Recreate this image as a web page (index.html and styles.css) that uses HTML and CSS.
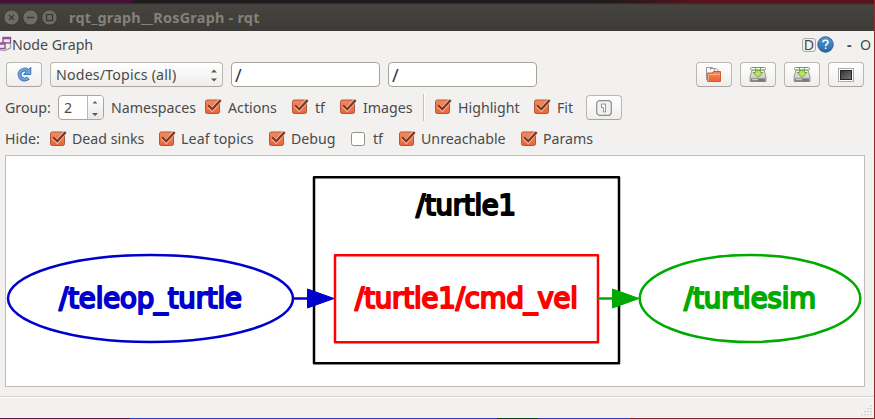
FILE: index.html
```html
<!DOCTYPE html>
<html lang="en">
<head>
<meta charset="utf-8">
<title>rqt_graph__RosGraph - rqt</title>
<link rel="stylesheet" href="styles.css">
</head>
<body>
<svg class="defs" width="0" height="0">
  <defs>
    <linearGradient id="orange" x1="0" y1="0" x2="0" y2="1"><stop offset="0" stop-color="#f58a5c"/><stop offset="1" stop-color="#ea6434"/></linearGradient>
    <linearGradient id="blue" x1="0" y1="0" x2="0" y2="1"><stop offset="0" stop-color="#5b9bd0"/><stop offset="1" stop-color="#2565a5"/></linearGradient>
    <linearGradient id="disk" x1="0" y1="0" x2="0" y2="1"><stop offset="0" stop-color="#f4f4f2"/><stop offset="1" stop-color="#b5b5b2"/></linearGradient>
    <linearGradient id="dark" x1="0" y1="0" x2="1" y2="1"><stop offset="0" stop-color="#333"/><stop offset="1" stop-color="#777"/></linearGradient>
    <symbol id="checked" viewBox="0 0 17 17">
      <rect x=".5" y="2" width="14" height="13.5" rx="1.8" fill="url(#orange)" stroke="#a85a40"/>
      <path d="M3.4 7.6 7.3 11.6 14.5 3" fill="none" stroke="#fbb596" stroke-width="4"/>
      <path d="M3.2 7.2 7.3 11.2 15.7 2" fill="none" stroke="#743a2a" stroke-width="2.3"/>
    </symbol>
    <symbol id="unchecked" viewBox="0 0 17 17"><rect x=".5" y="2.5" width="13" height="13" rx="2" fill="#fff" stroke="#94918c"/></symbol>
    <symbol id="save" viewBox="0 0 18 18">
      <path d="M3 4H15L17 11V15.5H1V11Z" fill="url(#disk)" stroke="#858583" stroke-width=".8"/>
      <path d="M2 12.5H16V15.5H2Z" fill="#777"/><path d="M3 13.7H9" stroke="#ddd"/>
      <rect x="1.5" y="1.5" width="15" height="2.4" rx="1" fill="#fff" stroke="#71a33c"/>
      <path d="M6.5 1.5V4M11.5 1.5V4" stroke="#71a33c"/>
      <path d="M6.6 4.5H11.4V6.5H14L9 11.6 4 6.5H6.6Z" fill="#b8e26a" stroke="#69a32e" stroke-width=".9"/>
    </symbol>
  </defs>
</svg>
<main class="window">
  <header class="titlebar">
    <svg class="controls" width="48" height="16" viewBox="0 0 48 16">
      <g fill="#6f6c66" stroke="#33322f" stroke-width=".8"><circle cx="7.5" cy="7.5" r="7.6"/><circle cx="26.5" cy="7.5" r="7.6"/><circle cx="45.5" cy="7.5" r="7.6"/></g>
      <g fill="none" stroke="#393834" stroke-width="1.3"><path d="M5 5 10 10M10 5 5 10M23 7.5H30"/><rect x="42.5" y="4.5" width="6" height="6"/></g>
    </svg>
    <span class="title">rqt_graph__RosGraph - rqt</span>
  </header>
  <div class="dock">
    <svg class="logo" width="12" height="17" viewBox="0 0 12 17"><path d="M0 15 5 15.5 10.5 13V9" stroke="#aaa" fill="none" stroke-width="1.5"/><g fill="#f4e5f5" stroke="#91509a" stroke-width="1.4"><rect x="3" y="2.5" width="7.5" height="5.5"/><rect x="-2" y="8" width="7" height="5.5"/></g><path d="M3 3.5H11M-2 9H5" stroke="#91509a" stroke-width="1.6"/></svg>
    <span class="dock-title">Node Graph</span>
    <span class="dock-d">D</span>
    <svg class="help" width="17" height="17" viewBox="0 0 17 17"><circle cx="8.5" cy="8.5" r="7.7" fill="url(#blue)" stroke="#285f96"/><path d="M6 6.3C6 3.6 11 3.6 11 6.3 11 8.2 8.6 8.2 8.6 10.2M8.6 11.5V13" fill="none" stroke="#fff" stroke-width="1.6"/></svg>
    <span class="dock-min">-</span><span class="dock-close">O</span>
  </div>
  <div class="toolbar">
    <button class="btn"><svg width="18" height="18" viewBox="0 0 18 18"><path d="M13.3 11.9A5 5 0 1 1 12.4 4.4" fill="none" stroke="#3c75b5" stroke-width="4"/><path d="M15.8 1.2V8.5H8.5Z" fill="#6ba5dc" stroke="#3c75b5"/><path d="M13 11.8A5 5 0 1 1 12.6 4.6" fill="none" stroke="#6ba5dc" stroke-width="2.3"/></svg></button>
    <div class="combo"><span class="combo-text">Nodes/Topics (all)</span><svg width="8" height="14" viewBox="0 0 8 14"><path d="M1 4.5 4 1.5 7 4.5ZM1 10.5 4 13.5 7 10.5Z" fill="#5d5b58"/></svg></div>
    <div class="field">/</div><div class="field">/</div>
    <div class="actions">
      <button class="btn"><svg width="18" height="18" viewBox="0 0 18 18"><path d="M1.5 14V1.5H7.5L9.5 3.5V6M5.5 4V2.5H11L13.5 5V9" fill="#fafafa" stroke="#999"/><path d="M2.5 15.5V7H7L8.5 5.5H15.5V15.5Z" fill="url(#orange)" stroke="#d55a2b"/><path d="M3.3 15V8.5H15" fill="none" stroke="#ffb08c"/></svg></button>
      <button class="btn"><svg width="18" height="18"><use href="#save"/></svg></button>
      <button class="btn"><svg width="18" height="18"><use href="#save"/></svg></button>
      <button class="btn"><svg width="18" height="18" viewBox="0 0 18 18"><rect x="1.5" y="2.5" width="15" height="13" fill="#fff" stroke="#aaa"/><rect x="3.5" y="4.5" width="11" height="9" fill="url(#dark)" stroke="#222"/></svg></button>
    </div>
  </div>
  <div class="options group-row">
    <span class="label">Group:</span>
    <div class="spin"><span class="value">2</span><span class="steps"><svg width="14" height="24" viewBox="0 0 14 24"><path d="M4.5 7.5 7 5 9.5 7.5ZM4 17 7 20 10 17Z" fill="#5d5b58"/></svg></span></div>
    <span class="label namespaces">Namespaces</span>
    <label class="check w-actions"><svg class="box"><use href="#checked"/></svg><span>Actions</span></label>
    <label class="check w-tf"><svg class="box"><use href="#checked"/></svg><span>tf</span></label>
    <label class="check w-images"><svg class="box"><use href="#checked"/></svg><span>Images</span></label>
    <i class="separator"></i>
    <label class="check w-highlight"><svg class="box"><use href="#checked"/></svg><span>Highlight</span></label>
    <label class="check w-fit"><svg class="box"><use href="#checked"/></svg><span>Fit</span></label>
    <button class="btn"><svg width="16" height="16" viewBox="0 0 16 16"><rect x=".7" y=".7" width="14.6" height="14.6" rx="3" fill="#f1f1ef" stroke="#8d8d8b" stroke-width="1.2"/><path d="M5.5 4H9.5V12H7.5V7.5H5.5Z" fill="#fff" stroke="#888" stroke-width=".9"/></svg></button>
  </div>
  <div class="options hide-row">
    <span class="label hide">Hide:</span>
    <label class="check w-dead"><svg class="box"><use href="#checked"/></svg><span>Dead sinks</span></label>
    <label class="check w-leaf"><svg class="box"><use href="#checked"/></svg><span>Leaf topics</span></label>
    <label class="check w-debug"><svg class="box"><use href="#checked"/></svg><span>Debug</span></label>
    <label class="check w-tf"><svg class="box"><use href="#unchecked"/></svg><span>tf</span></label>
    <label class="check w-unreachable"><svg class="box"><use href="#checked"/></svg><span>Unreachable</span></label>
    <label class="check"><svg class="box"><use href="#checked"/></svg><span>Params</span></label>
  </div>
  <section class="canvas">
    <svg class="graph" width="858" height="230" viewBox="6 156 858 230">
      <g fill="none" stroke-width="2.5" stroke-linejoin="round">
        <rect x="314" y="177.2" width="305" height="186" stroke="#000"/>
        <rect x="335" y="255.2" width="263" height="87" stroke="#f00"/>
        <ellipse cx="150.5" cy="298.5" rx="142.5" ry="43.5" stroke="#0000cd"/>
        <ellipse cx="750" cy="298.5" rx="110.3" ry="43.5" stroke="#00aa00"/>
        <path d="M293 298.5H308" stroke="#0000cd"/><path d="M598 298.5H613" stroke="#00aa00"/>
      </g>
      <path d="M307.5 289 334 298.5 307.5 308Z" fill="#0000cd" stroke="#0000cd"/>
      <path d="M612.5 289 639 298.5 612.5 308Z" fill="#00aa00" stroke="#00aa00"/>
      <g class="node-text">
        <text x="416" y="215" textLength="100" fill="#000" stroke="#000">/turtle1</text>
        <text x="59" y="308" textLength="183" fill="#0000cd" stroke="#0000cd">/teleop_turtle</text>
        <text x="355" y="308" textLength="223" fill="#f00" stroke="#f00">/turtle1/cmd_vel</text>
        <text x="684" y="308" textLength="132" fill="#00aa00" stroke="#00aa00">/turtlesim</text>
      </g>
    </svg>
  </section>
  <footer class="status"><svg width="11" height="12" viewBox="0 0 11 12"><path d="M10 1V12M7 4V12M4 7V12M1 10V12" stroke="#c5c2be" stroke-width="1.2" stroke-dasharray="1.2 1.8"/></svg></footer>
</main>
</body>
</html>
```
FILE: styles.css
```css
* { box-sizing: border-box; }
body { margin: 0; overflow: hidden; }
.defs { display: block; height: 0; }
.window {
  width: 875px; height: 419px; display: flex; flex-direction: column;
  background: #f2f1ef; border-right: 1px solid #922c2c;
  font: 14.2px/20px "Noto Sans", "Open Sans", sans-serif; color: #4a4a4a;
}
svg { display: block; flex: none; }
.titlebar {
  height: 31px; flex: none; display: flex; align-items: center; padding: 5px 0 0 4px;
  background: linear-gradient(90deg, #481038 0 130px, #1c1a1a 136px 600px, #57151b 700px) 0 0 / 100% 3px no-repeat, linear-gradient(#2c2b29 3px, #45443f 5px, #3c3b37);
}
.controls { overflow: visible; }
.title { margin-left: 17px; font-weight: 700; font-size: 14.4px; letter-spacing: .25px; color: #85817a; }
.dock { height: 27px; flex: none; display: flex; align-items: center; padding-top: 1px; }
.logo { margin-top: -3px; }
.dock-d { margin-left: auto; width: 14px; height: 14px; border: 1px solid #aaa; border-radius: 3px; line-height: 12px; display: flex; justify-content: center; }
.help { margin-left: 1px; margin-top: -1px; }
.dock-min { margin-left: 13px; width: 13px; font-weight: 700; }
.dock-close { width: 14px; }
.toolbar { display: flex; padding: 4px 10px 0 6px; height: 37px; flex: none; }
.btn {
  width: 36px; height: 25px; padding: 0; border: 1px solid #bab7b2; border-bottom-color: #aaa69f; border-radius: 4px;
  background: linear-gradient(#fff, #efeeec); display: flex; align-items: center; justify-content: center; flex: none;
}
.combo { width: 173px; height: 25px; margin-left: 8px; padding: 0 4px 0 5px; display: flex; align-items: center; justify-content: space-between; border: 1px solid #bab7b2; border-bottom-color: #aaa69f; border-radius: 4px; background: linear-gradient(#fff, #eeedeb); }
.combo-text { letter-spacing: .18px; }
.field { width: 149px; height: 25px; margin-left: 8px; padding: 2px 3px; background: #fff; border: 1px solid #a6a39d; border-radius: 4px; font-size: 18px; color: #333; }
.actions { display: flex; gap: 8px; margin-left: auto; }
.options { display: flex; align-items: center; flex: none; padding-left: 5px; white-space: nowrap; }
.group-row { height: 25px; }
.hide-row { height: 31px; padding-top: 7px; margin-bottom: 4px; }
.label { width: 53px; flex: none; }
.label.hide { width: 45px; }
.label.namespaces { width: 94px; margin-left: 7px; }
.spin { width: 46px; height: 25px; display: flex; border: 1px solid #aaa69f; border-radius: 4px; overflow: hidden; background: #fff; flex: none; }
.value { width: 29px; padding: 2px 0 0 5px; }
.steps { width: 16px; border-left: 1px solid #bab7b2; background: linear-gradient(#fff, #e9e8e6); }
.check { display: flex; align-items: center; flex: none; gap: 6px; }
.hide-row .check { gap: 5px; }
.box { width: 17px; height: 17px; margin-top: -2px; }
.w-actions { width: 87px; } .w-tf { width: 48px; } .w-images { width: 83px; }
.separator { width: 2px; height: 27px; margin-right: 10px; border-left: 1px solid #c5c2be; border-right: 1px solid #fff; flex: none; }
.w-highlight { width: 99px; } .w-fit { width: 52px; }
.w-dead { width: 109px; } .w-leaf { width: 110px; letter-spacing: .1px; } .w-debug { width: 82px; } .w-unreachable { width: 122px; }
.canvas { width: 860px; height: 232px; margin-left: 5px; border: 1px solid #bfbdb6; background: #fff; flex: none; }
.node-text { font: 27.5px "DejaVu Sans", sans-serif; stroke-width: 2.05px; stroke-linejoin: round; }
.status {
  height: 23px; margin-top: auto; border-top: 1px solid #d5d3d1; flex: none; display: flex; justify-content: flex-end; align-items: flex-end; padding: 0 2px 3px;
  background: linear-gradient(90deg, #5c1a49 0 130px, #3340c4 130px 497px, #064325 497px 538px, #3340c4 538px 630px, #812434 630px) bottom / 100% 1px no-repeat, linear-gradient(#fff 1px, #f2f1ef 1px);
}
```
